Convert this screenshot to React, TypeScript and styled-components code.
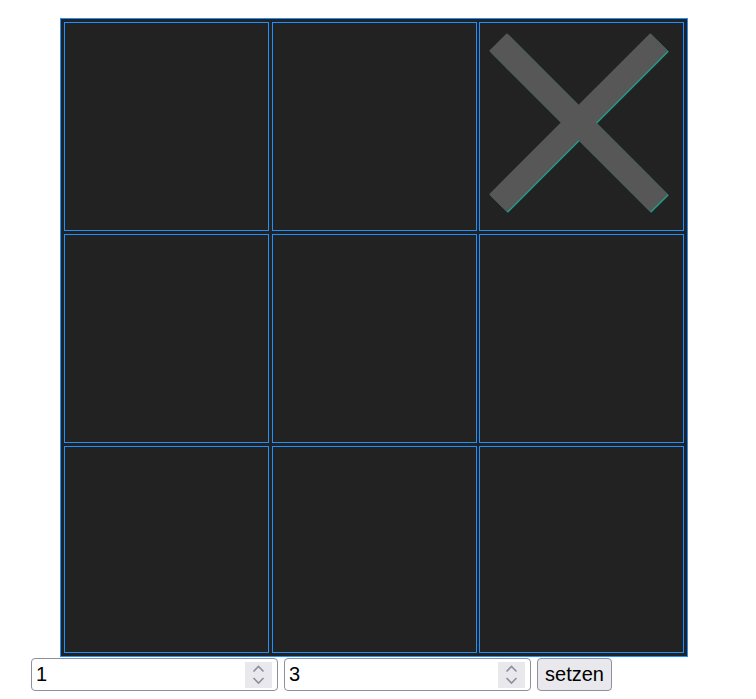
import React, { useState } from 'react';
import styled, { createGlobalStyle } from 'styled-components';

type Mark = '' | 'X' | 'O';

const GlobalStyle = createGlobalStyle`
  body {
    margin: 8px;
    background: #ffffff;
    font-family: 'Liberation Sans', Arial, sans-serif;
  }
`;

const Page = styled.div`
  padding-top: 10px;
`;

const Board = styled.div`
  display: grid;
  grid-template-columns: repeat(3, 205px);
  grid-template-rows: 209px 209px 207px;
  gap: 3px 2.5px;
  width: fit-content;
  margin-left: 52px;
  padding: 3px;
  background: #222222;
  border: 1px solid #1e90ff;
`;

const Cell = styled.div`
  box-sizing: border-box;
  border: 1px solid #1e90ff;
  background: #222222;
`;

const MarkSvg = styled.svg`
  display: block;
  width: 100%;
  height: 100%;
`;

const Controls = styled.div`
  display: flex;
  align-items: center;
  gap: 6.5px;
  margin: 1px 0 0 23px;
`;

const NumberField = styled.div`
  box-sizing: border-box;
  display: flex;
  align-items: center;
  width: 246.5px;
  height: 33px;
  padding: 0 5px 0 4px;
  border: 1px solid #8f8f9d;
  border-radius: 4px;
  background: #ffffff;
`;

const NumberInput = styled.input`
  flex: 1;
  min-width: 0;
  padding: 0;
  border: none;
  outline: none;
  background: transparent;
  font-family: 'Liberation Sans', Arial, sans-serif;
  font-size: 20px;
  color: #000000;
`;

const Spinner = styled.div`
  flex: none;
  width: 27px;
  height: 26px;
  background: #e9e9ed;
`;

const SetButton = styled.button`
  box-sizing: border-box;
  width: 75px;
  height: 33px;
  padding: 0;
  border: 1px solid #8f8f9d;
  border-radius: 4px;
  background: #e9e9ed;
  color: #000000;
  font-family: 'Liberation Sans', Arial, sans-serif;
  font-size: 20px;
  cursor: pointer;
`;

const Cross: React.FC = () => (
  <MarkSvg viewBox="0 0 203 207">
    <g stroke="#1f9e89" strokeWidth={25} transform="translate(1 1)">
      <line x1={18} y1={19} x2={179} y2={180} />
      <line x1={179} y1={19} x2={18} y2={180} />
    </g>
    <g stroke="#575757" strokeWidth={25}>
      <line x1={18} y1={19} x2={179} y2={180} />
      <line x1={179} y1={19} x2={18} y2={180} />
    </g>
  </MarkSvg>
);

const Chevrons: React.FC = () => (
  <svg width="27" height="26" viewBox="0 0 27 26">
    <g fill="none" stroke="#8f8f9d" strokeWidth={1.6}>
      <polyline points="8.5,9.5 13.5,4.5 18.5,9.5" />
      <polyline points="8.5,16 13.5,21 18.5,16" />
    </g>
  </svg>
);

const Field: React.FC<{ value: string; onChange: (v: string) => void }> = ({ value, onChange }) => (
  <NumberField>
    <NumberInput value={value} onChange={(e) => onChange(e.target.value)} />
    <Spinner>
      <Chevrons />
    </Spinner>
  </NumberField>
);

const App: React.FC = () => {
  const [cells, setCells] = useState<Mark[]>(['', '', 'X', '', '', '', '', '', '']);
  const [row, setRow] = useState('1');
  const [col, setCol] = useState('3');

  const place = () => {
    const r = parseInt(row, 10) - 1;
    const c = parseInt(col, 10) - 1;
    if (r < 0 || r > 2 || c < 0 || c > 2) return;
    const next = [...cells];
    next[r * 3 + c] = 'X';
    setCells(next);
  };

  return (
    <Page>
      <GlobalStyle />
      <Board>
        {cells.map((mark, i) => (
          <Cell key={i}>{mark === 'X' && <Cross />}</Cell>
        ))}
      </Board>
      <Controls>
        <Field value={row} onChange={setRow} />
        <Field value={col} onChange={setCol} />
        <SetButton onClick={place}>setzen</SetButton>
      </Controls>
    </Page>
  );
};

export default App;
